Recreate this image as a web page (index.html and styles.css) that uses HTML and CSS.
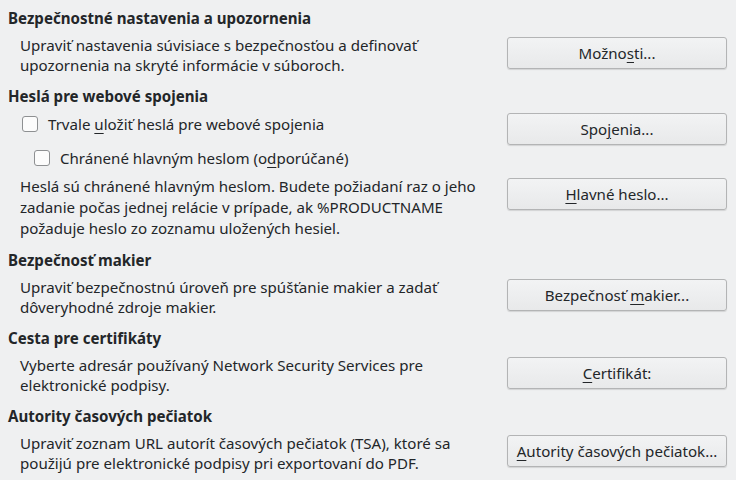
FILE: index.html
```html
<!DOCTYPE html>
<html lang="sk">
<head>
<meta charset="utf-8">
<link rel="stylesheet" href="styles.css">
</head>
<body>
<div class="page">
  <section class="sec">
    <h2 class="head">Bezpečnostné nastavenia a upozornenia</h2>
    <div class="row">
      <p class="desc">Upraviť nastavenia súvisiace s bezpečnosťou a definovať<br>upozornenia na skryté informácie v súboroch.</p>
      <button class="btn">Možno<u>s</u>ti...</button>
    </div>
  </section>

  <section class="sec">
    <h2 class="head">Heslá pre webové spojenia</h2>
    <div class="row row-check">
      <label class="check"><span class="box"></span><span>Trvale <u>u</u>ložiť heslá pre webové spojenia</span></label>
      <button class="btn">Spo<u>j</u>enia...</button>
    </div>
    <div class="row row-sub">
      <label class="check"><span class="box"></span><span>Chránené hlavným heslom (o<u>d</u>porúčané)</span></label>
    </div>
    <div class="row row-master">
      <p class="desc">Heslá sú chránené hlavným heslom. Budete požiadaní raz o jeho<br>zadanie počas jednej relácie v prípade, ak %PRODUCTNAME<br>požaduje heslo zo zoznamu uložených hesiel.</p>
      <button class="btn"><u>H</u>lavné heslo...</button>
    </div>
  </section>

  <section class="sec">
    <h2 class="head">Bezpečnosť makier</h2>
    <div class="row">
      <p class="desc">Upraviť bezpečnostnú úroveň pre spúšťanie makier a zadať<br>dôveryhodné zdroje makier.</p>
      <button class="btn">Bezpečnosť <u>m</u>akier...</button>
    </div>
  </section>

  <section class="sec">
    <h2 class="head">Cesta pre certifikáty</h2>
    <div class="row">
      <p class="desc">Vyberte adresár používaný Network Security Services pre<br>elektronické podpisy.</p>
      <button class="btn"><u>C</u>ertifikát:</button>
    </div>
  </section>

  <section class="sec">
    <h2 class="head">Autority časových pečiatok</h2>
    <div class="row">
      <p class="desc">Upraviť zoznam URL autorít časových pečiatok (TSA), ktoré sa<br>použijú pre elektronické podpisy pri exportovaní do PDF.</p>
      <button class="btn"><u>A</u>utority časových pečiatok...</button>
    </div>
  </section>
</div>
</body>
</html>
```

FILE: styles.css
```css
html, body {
  margin: 0;
  padding: 0;
  background: #eff0f1;
}
body {
  font-family: "Noto Sans", "Open Sans", sans-serif;
  font-size: 15.1px;
  line-height: 20px;
  color: #232629;
  width: 736px;
  height: 480px;
  overflow: hidden;
}
.page {
  padding: 8px 9px 0 8px;
  display: flex;
  flex-direction: column;
  gap: 11px;
}
.sec {
  display: flex;
  flex-direction: column;
}
.head {
  margin: 0 0 7px 0;
  font-size: 15.1px;
  font-weight: bold;
  line-height: 20px;
}
.row {
  display: grid;
  grid-template-columns: 1fr 220px;
  column-gap: 20px;
  align-items: start;
  padding-left: 12px;
}
.desc {
  margin: 0;
  white-space: nowrap;
}
.btn {
  margin-top: 2px;
  height: 32px;
  width: 220px;
  font: inherit;
  color: #232629;
  background: linear-gradient(#f2f3f4, #e8e9ea);
  border: 1px solid #b3b4b5;
  border-radius: 3px;
  box-shadow: 0 1px 1px rgba(0,0,0,0.12);
  padding: 0 6px;
  text-align: center;
}
.btn u, .check u {
  text-underline-offset: 3px;
}
.check {
  display: flex;
  align-items: center;
  gap: 10px;
  height: 20px;
}
.row-check {
  padding-left: 14px;
  margin-top: 1px;
}
.row-check .btn {
  margin-top: -1px;
}
.row-sub {
  padding-left: 26px;
  margin-top: 3px;
}
.row-master {
  margin-top: 8px;
}
.row-master .desc {
  line-height: 21px;
}
.box {
  width: 14px;
  height: 14px;
  border: 1px solid #8e9092;
  border-radius: 3px;
  background: #fcfcfc;
  flex: none;
}
```
